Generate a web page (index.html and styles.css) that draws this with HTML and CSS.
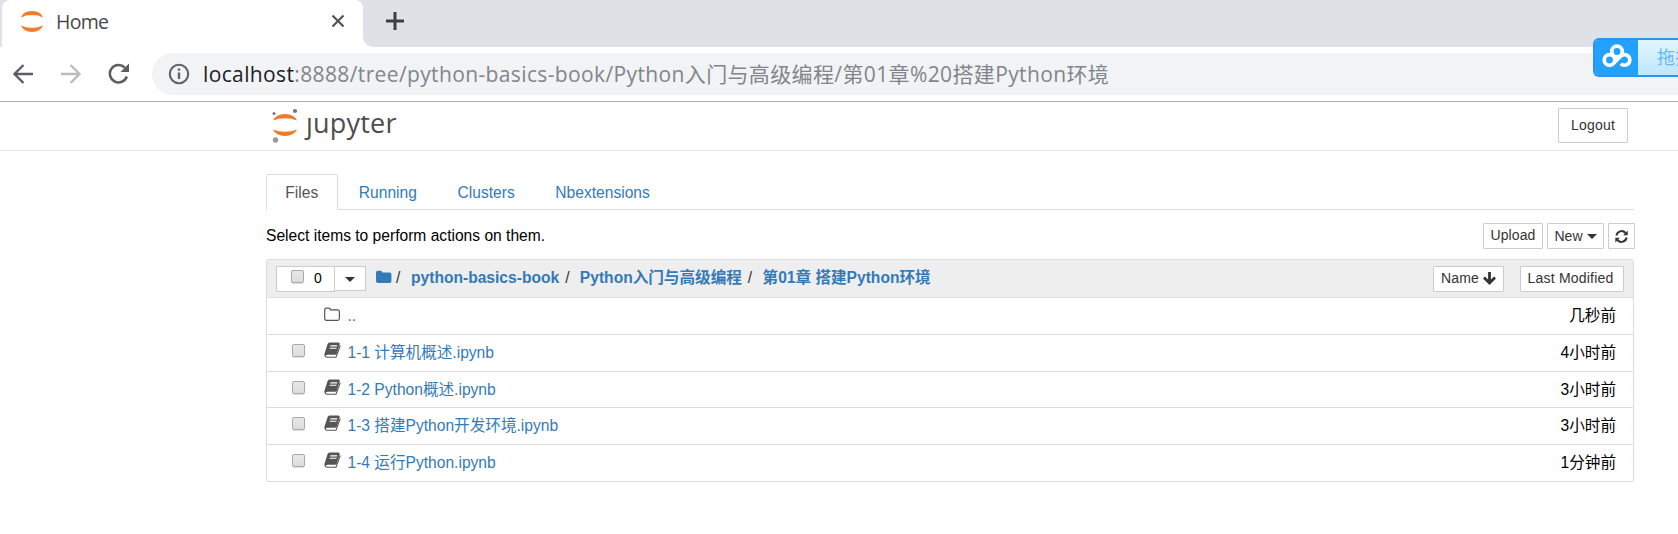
FILE: index.html
```html
<!DOCTYPE html>
<html lang="zh-CN">
<head>
<meta charset="utf-8">
<title>Home</title>
<link rel="stylesheet" href="styles.css">
</head>
<body>
<svg class="defs" width="0" height="0" aria-hidden="true">
  <symbol id="book" viewBox="0 0 16 15"><path fill="#fff" stroke="#555" stroke-width="1" d="M3 11.2 1.2 12.3Q1 14.3 3 14.3H11.3L15.3 3.3"/><path fill="#555" d="M5.2.4H13.6Q15.2.6 14.8 2L12 11Q11.6 12 10.5 12H2.7Q1 12.100.8 13.2 0 12 .5 10.800L3.400 1.900Q3.900.4 5.200.4Z"/><path stroke="#fff" stroke-width="1" d="M6 3.600H12.400M5.300 5.900H11.700"/></symbol>
  <symbol id="caret" viewBox="0 0 10 5"><path fill="#333" d="M0 0H10L5 5Z"/></symbol>
</svg>
<div class="tabstrip">
  <div class="browser-tab">
    <svg class="favicon" width="24" height="25" viewBox="0 0 24 25"><path fill="#f77b26" d="M1 8.500A11.500 9 0 0 1 23 8.500 15 7.500 0 0 0 1 8.500ZM1 16.500A11.500 9 0 0 0 23 16.500 15 7.500 0 0 1 1 16.500Z"/></svg>
    <span class="tab-title">Home</span>
    <svg class="close" width="14" height="14" viewBox="0 0 14 14"><path d="M1.500 1.500 12.500 12.500M12.500 1.500 1.500 12.500" stroke="#505357" stroke-width="2.200"/></svg>
  </div>
  <svg class="plus" width="18" height="18" viewBox="0 0 18 18"><path d="M9 0V18M0 9H18" stroke="#3c4043" stroke-width="3"/></svg>
</div>
<div class="toolbar">
  <svg class="nav" width="20" height="20" viewBox="0 0 20 20"><path d="M20 10H2M10.500 1 1.500 10 10.500 19" fill="none" stroke="#5a5d61" stroke-width="2.300"/></svg>
  <svg class="nav forward" width="20" height="20" viewBox="0 0 20 20"><path d="M0 10H18M9.500 1 18.500 10 9.500 19" fill="none" stroke="#babcbe" stroke-width="2.300"/></svg>
  <svg class="nav reload" width="22" height="22" viewBox="0 0 22 22"><path d="M18.800 13.500A8.700 8.700 0 1 1 16.800 4.600" fill="none" stroke="#5a5d61" stroke-width="2.500"/><path d="M21 .5V9H12.500Z" fill="#5a5d61"/></svg>
  <div class="omnibox">
    <svg width="22" height="22" viewBox="0 0 22 22"><circle cx="11" cy="11" r="9.200" fill="none" stroke="#5f6368" stroke-width="2.100"/><path d="M11 9.500V16M11 5.500V7.800" stroke="#5f6368" stroke-width="2.400"/></svg>
    <span class="url"><span class="host">localhost</span><span class="path">:8888/tree/python-basics-book/Python入门与高级编程/第01章%20搭建Python环境</span></span>
  </div>
</div>
<div class="netdisk">
  <div class="netdisk-logo"><svg width="30" height="24" viewBox="0 0 30 24" fill="none" stroke="#fff" stroke-width="3.700"><circle cx="15" cy="7.500" r="5.300"/><circle cx="7.500" cy="16" r="5.300"/><path d="M11.300 19.500 18.700 12.300A5.300 5.300 0 1 1 18.800 19.700"/></svg></div>
  <div class="netdisk-text">拖拽</div>
</div>
<header class="header">
  <div class="logo">
    <svg width="28" height="36" viewBox="0 0 28 36"><path fill="#f37726" d="M2 12.500A12.500 9 0 0 1 26 12.500 17 8 0 0 0 2 12.500ZM2 21.500A12.500 9 0 0 0 26 21.500 17 8 0 0 1 2 21.500Z"/><circle cx="3" cy="5.500" r="1.500" fill="#777"/><circle cx="24" cy="3" r="2.100" fill="#777"/><circle cx="4.500" cy="32" r="2.700" fill="#999"/></svg>
    <span class="wordmark">jupyter</span>
  </div>
  <button class="btn logout">Logout</button>
</header>
<main class="content">
  <nav class="tabs"><a class="tab active">Files</a><a class="tab">Running</a><a class="tab">Clusters</a><a class="tab">Nbextensions</a></nav>
  <div class="actions">
    <span class="hint">Select items to perform actions on them.</span>
    <div class="buttons">
      <button class="btn upload">Upload</button>
      <button class="btn new">New<svg width="10" height="5"><use href="#caret"/></svg></button>
      <button class="btn refresh"><svg width="13" height="13" viewBox="0 0 13 13"><path d="M1.400 5.500A5.200 5.200 0 0 1 10.500 3M11.600 7.500A5.200 5.200 0 0 1 2.500 10" fill="none" stroke="#333" stroke-width="2"/><path fill="#333" d="M12.700.6V5.200H8.100ZM.3 12.400V7.800H4.900Z"/></svg></button>
    </div>
  </div>
  <section class="list">
    <div class="list-head">
      <div class="select-group"><div class="count"><i class="check"></i><span>0</span></div><div class="drop"><svg width="10" height="5"><use href="#caret"/></svg></div></div>
      <div class="crumbs">
        <svg width="16" height="14" viewBox="0 0 16 14"><path fill="#337ab7" d="M0 2.500Q0 .8 1.700.8H4.700Q6.300.8 6.300 2.400H13.500Q15.400 2.400 15.400 4.200V11.200Q15.400 13 13.500 13H1.900Q0 13 0 11.200Z"/></svg>
        <span class="slash s1">/</span><a class="c1">python-basics-book</a><span class="slash">/</span><a class="c2">Python入门与高级编程</a><span class="slash s3">/</span><a class="c3">第01章 搭建Python环境</a>
      </div>
      <div class="sorts">
        <button class="btn name">Name<svg width="13" height="13" viewBox="0 0 13 13"><path d="M6.500 0V11M1 5.500 6.500 11 12 5.500" fill="none" stroke="#333" stroke-width="2.800"/></svg></button>
        <button class="btn modified">Last Modified</button>
      </div>
    </div>
    <div class="row"><i class="check hidden"></i><svg class="icon folder" width="17" height="15" viewBox="0 0 17 15"><path d="M.7 3Q.7 1.200 2.500 1.200H4.800Q6.400 1.200 6.400 2.900H13.600Q15.400 2.900 15.400 4.700V11.500Q15.400 13.300 13.600 13.300H2.500Q.7 13.300.7 11.500Z" fill="none" stroke="#555" stroke-width="1.200"/></svg><a class="dots">..</a><time>几秒前</time></div>
    <div class="row"><i class="check"></i><svg class="icon" width="17" height="16"><use href="#book"/></svg><a>1-1 计算机概述.ipynb</a><time>4小时前</time></div>
    <div class="row short"><i class="check"></i><svg class="icon" width="17" height="16"><use href="#book"/></svg><a>1-2 Python概述.ipynb</a><time>3小时前</time></div>
    <div class="row"><i class="check"></i><svg class="icon" width="17" height="16"><use href="#book"/></svg><a>1-3 搭建Python开发环境.ipynb</a><time>3小时前</time></div>
    <div class="row"><i class="check"></i><svg class="icon" width="17" height="16"><use href="#book"/></svg><a>1-4 运行Python.ipynb</a><time>1分钟前</time></div>
  </section>
</main>
</body>
</html>
```
FILE: styles.css
```css
* { box-sizing: border-box; }
body { margin: 0; height: 534px; overflow: hidden; background: #fff; color: #000; font: 15.6px/20px "Liberation Sans", "Noto Sans CJK SC", sans-serif; }
svg { display: block; flex: none; }
.defs { position: absolute; }
.tabstrip { display: flex; height: 47px; background: #dee1e6; padding-left: 2px; }
.browser-tab { position: relative; display: flex; align-items: center; width: 361px; padding: 0 18px 5px; background: #fff; border-radius: 8px 8px 0 0; }
.browser-tab::after { content: ""; position: absolute; left: 100%; bottom: 0; width: 10px; height: 10px; background: radial-gradient(circle at 100% 0, transparent 9.5px, #fff 10px); }
.tab-title { margin-left: 12px; padding-top: 2px; font: 19.5px/24px "Open Sans", sans-serif; color: #45494d; letter-spacing: -.7px; }
.close { margin-left: auto; }
.plus { margin: 12px 0 0 23px; }
.toolbar { display: flex; align-items: center; height: 55px; padding-left: 13px; border-bottom: 1px solid #b0b0b0; }
.forward { margin-left: 28px; }
.reload { margin-left: 27px; }
.omnibox { display: flex; align-items: center; flex: 1; height: 42px; margin-left: 22px; padding-left: 16px; background: #f1f3f4; border-radius: 21px 0 0 21px; }
.url { margin-left: 13px; font: 21px/30px "Open Sans", "Noto Sans CJK SC", sans-serif; letter-spacing: .37px; white-space: nowrap; color: #80868b; }
.host { color: #202124; }
.netdisk { position: absolute; left: 1593px; top: 38px; width: 85px; height: 39px; display: flex; overflow: hidden; border: 2px solid #2494f5; border-right: 0; border-radius: 6px 0 0 6px; }
.netdisk-logo { flex: none; width: 43px; background: #22a1ff; padding: 4px 0 0 7px; }
.netdisk-text { flex: none; width: 40px; padding: 6px 0 0 19px; font-size: 18px; line-height: 24px; color: #66b9f8; white-space: nowrap; background: linear-gradient(#e3f6ff, #bfe6fe); }
.header { display: flex; justify-content: space-between; align-items: flex-start; height: 49px; padding: 6px 50px 0 271px; border-bottom: 1px solid #e5e5e5; }
.logo { display: flex; }
.wordmark { margin: -5px 0 0 7px; font: 27px/40px "Open Sans", sans-serif; letter-spacing: .2px; color: #4e4e4e; clip-path: inset(13px -4px 0 -10px); }
.btn { display: flex; align-items: center; justify-content: center; height: 26px; padding: 0; border: 1px solid #ccc; border-radius: 1px; background: #fff; color: #333; font: 14px/18px "Liberation Sans", sans-serif; white-space: nowrap; }
.logout { width: 70px; height: 35px; padding-bottom: 2px; letter-spacing: .2px; }
.content { width: 1368px; margin-left: 266px; padding-top: 23px; }
.tabs { display: flex; height: 36px; border-bottom: 1px solid #ddd; }
.tab { height: 36px; padding: 8px 18.3px 0; border: 1px solid transparent; margin-right: 2px; color: #337ab7; }
.active { border-color: #ddd #ddd #fff; border-radius: 2px 2px 0 0; color: #555; }
.actions { display: flex; justify-content: space-between; height: 49px; padding-top: 13px; margin-right: -1px; }
.hint { padding-top: 3px; }
.buttons { display: flex; gap: 4px; }
.upload { width: 60px; padding-bottom: 2px; letter-spacing: .1px; }
.new { width: 57px; }
.new svg { margin-left: 4px; }
.refresh { width: 27px; }
.list { border: 1px solid #ddd; border-radius: 2px; }
.list-head { display: flex; height: 37px; padding: 6px 9px 0; background: #eee; }
.select-group { display: flex; }
.count { display: flex; width: 59px; height: 26px; padding: 3px 0 0 14px; background: #fff; border: 1px solid #ccc; font-size: 14px; }
.count span { margin: -2px 0 0 10px; }
.drop { width: 32px; height: 25px; margin-left: -1px; padding: 10px 0 0 10px; background: #fff; border: 1px solid #ccc; }
.check { display: block; flex: none; width: 13px; height: 13px; border: 1px solid #aaa; border-radius: 2px; background: linear-gradient(#e8e8e8, #dcdcdc); box-shadow: 0 1px 1px #ddd; }
.hidden { visibility: hidden; }
.crumbs { display: flex; margin-left: 10px; padding-top: 1px; color: #333; white-space: nowrap; }
.crumbs svg { margin-top: 3px; }
.crumbs a, .crumbs span { padding-top: 1px; }
.crumbs a { font-weight: bold; color: #337ab7; }
.slash { width: 20.7px; padding-left: 6px; }
.s1 { width: 19px; padding-left: 4px; }
.sorts { display: flex; gap: 16px; margin-left: auto; }
.sorts .btn { padding-bottom: 2px; letter-spacing: .12px; }
.name { width: 71px; }
.name svg { margin-left: 4px; }
.modified { width: 104px; }
.sorts .modified { padding-right: 3px; letter-spacing: .2px; }
.row { display: flex; height: 37px; padding: 8px 17px 0 25px; border-top: 1px solid #ddd; white-space: nowrap; }
.short { height: 36px; }
.row .check { margin-top: 1px; }
.icon { margin: -1px 6.5px 0 19px; }
.folder { margin-top: 1px; }
.row a { padding-top: 0; color: #337ab7; }
.row time { margin-left: auto; }
```
